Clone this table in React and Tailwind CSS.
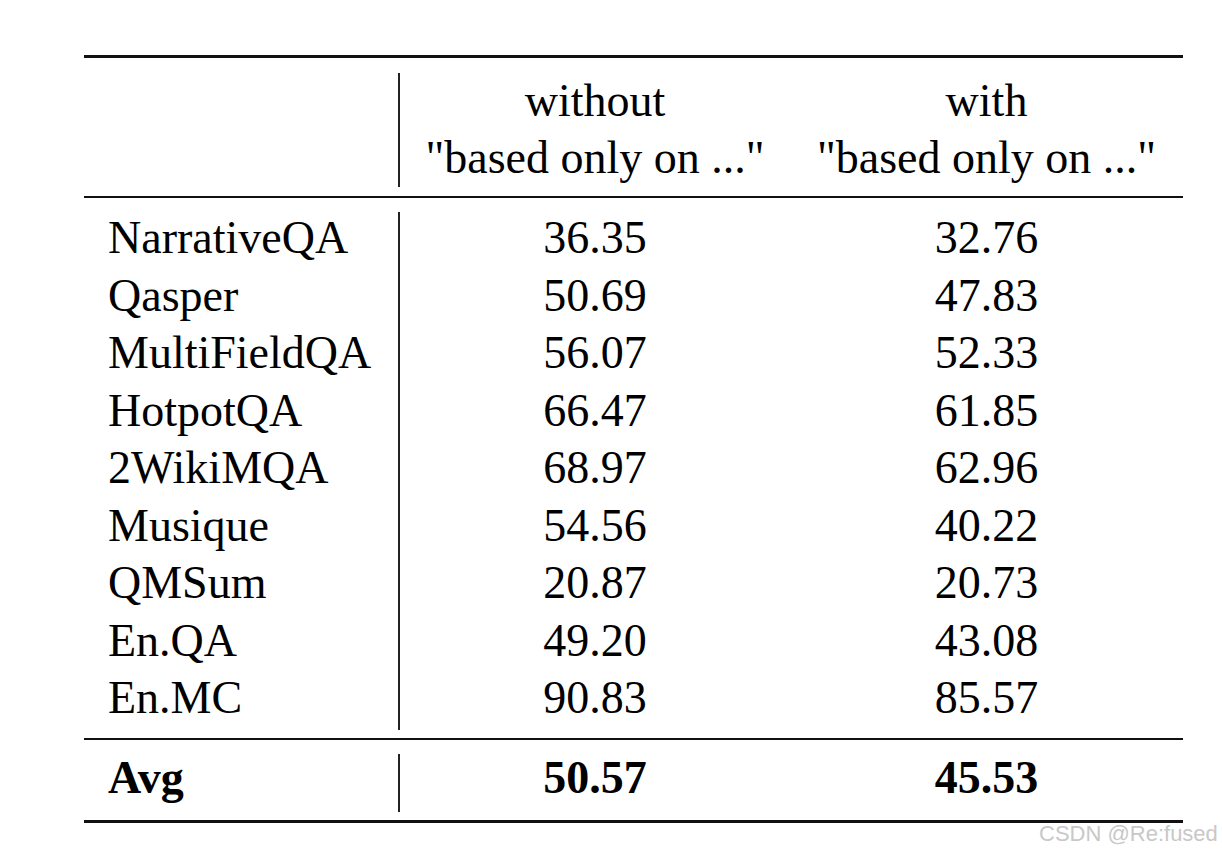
import React from "react";

const rows = [
  { name: "NarrativeQA", without: "36.35", with: "32.76" },
  { name: "Qasper", without: "50.69", with: "47.83" },
  { name: "MultiFieldQA", without: "56.07", with: "52.33" },
  { name: "HotpotQA", without: "66.47", with: "61.85" },
  { name: "2WikiMQA", without: "68.97", with: "62.96" },
  { name: "Musique", without: "54.56", with: "40.22" },
  { name: "QMSum", without: "20.87", with: "20.73" },
  { name: "En.QA", without: "49.20", with: "43.08" },
  { name: "En.MC", without: "90.83", with: "85.57" },
];

const serif = { fontFamily: '"Liberation Serif", "Times New Roman", serif' };

const App = () => {
  return (
    <div className="relative w-[1222px] h-[852px] bg-white text-black overflow-hidden">
      <div className="ml-[84px] w-[1099px] pt-[55px] text-[46px]" style={serif}>
        {/* top rule */}
        <div className="h-[3px] bg-[#111]"></div>

        {/* Header */}
        <div className="flex pt-[15px] pb-[9px]">
          <div className="w-[314px] h-[114px]"></div>
          <div className="w-[2px] bg-[#222]"></div>
          <div className="w-[390px] h-[114px] text-center leading-[57px] -mt-[1.5px]">
            <div>without</div>
            <div>"based only on ..."</div>
          </div>
          <div className="flex-1 h-[114px] text-center leading-[57px] -mt-[1.5px]">
            <div>with</div>
            <div>"based only on ..."</div>
          </div>
        </div>

        {/* mid rule */}
        <div className="h-[2px] bg-[#111]"></div>

        {/* Body */}
        <div className="flex pt-[14px] pb-[8.5px]">
          <div className="w-[314px] pl-[24px]">
            {rows.map((r) => (
              <div key={r.name} className="h-[57.5px] leading-[51.5px] whitespace-nowrap">
                {r.name}
              </div>
            ))}
          </div>
          <div className="w-[2px] bg-[#222]"></div>
          <div className="w-[390px] text-center">
            {rows.map((r) => (
              <div key={r.name} className="h-[57.5px] leading-[51.5px]">
                {r.without}
              </div>
            ))}
          </div>
          <div className="flex-1 text-center">
            {rows.map((r) => (
              <div key={r.name} className="h-[57.5px] leading-[51.5px]">
                {r.with}
              </div>
            ))}
          </div>
        </div>

        {/* rule above avg */}
        <div className="h-[2px] bg-[#111]"></div>

        {/* Avg */}
        <div className="flex pt-[14px] pb-[8px] font-bold">
          <div className="w-[314px] pl-[24px] h-[58px] leading-[48px]">Avg</div>
          <div className="w-[2px] bg-[#222]"></div>
          <div className="w-[390px] text-center leading-[48px]">50.57</div>
          <div className="flex-1 text-center leading-[48px]">45.53</div>
        </div>

        {/* bottom rule */}
        <div className="h-[3px] bg-[#111]"></div>
      </div>

      {/* watermark */}
      <div
        className="absolute left-[1039px] top-[823px] text-[22px] leading-none text-[#c8c8c8] whitespace-nowrap"
        style={{ fontFamily: '"Liberation Sans", Arial, sans-serif' }}
      >
        CSDN @Re:fused
      </div>
    </div>
  );
};

export default App;
